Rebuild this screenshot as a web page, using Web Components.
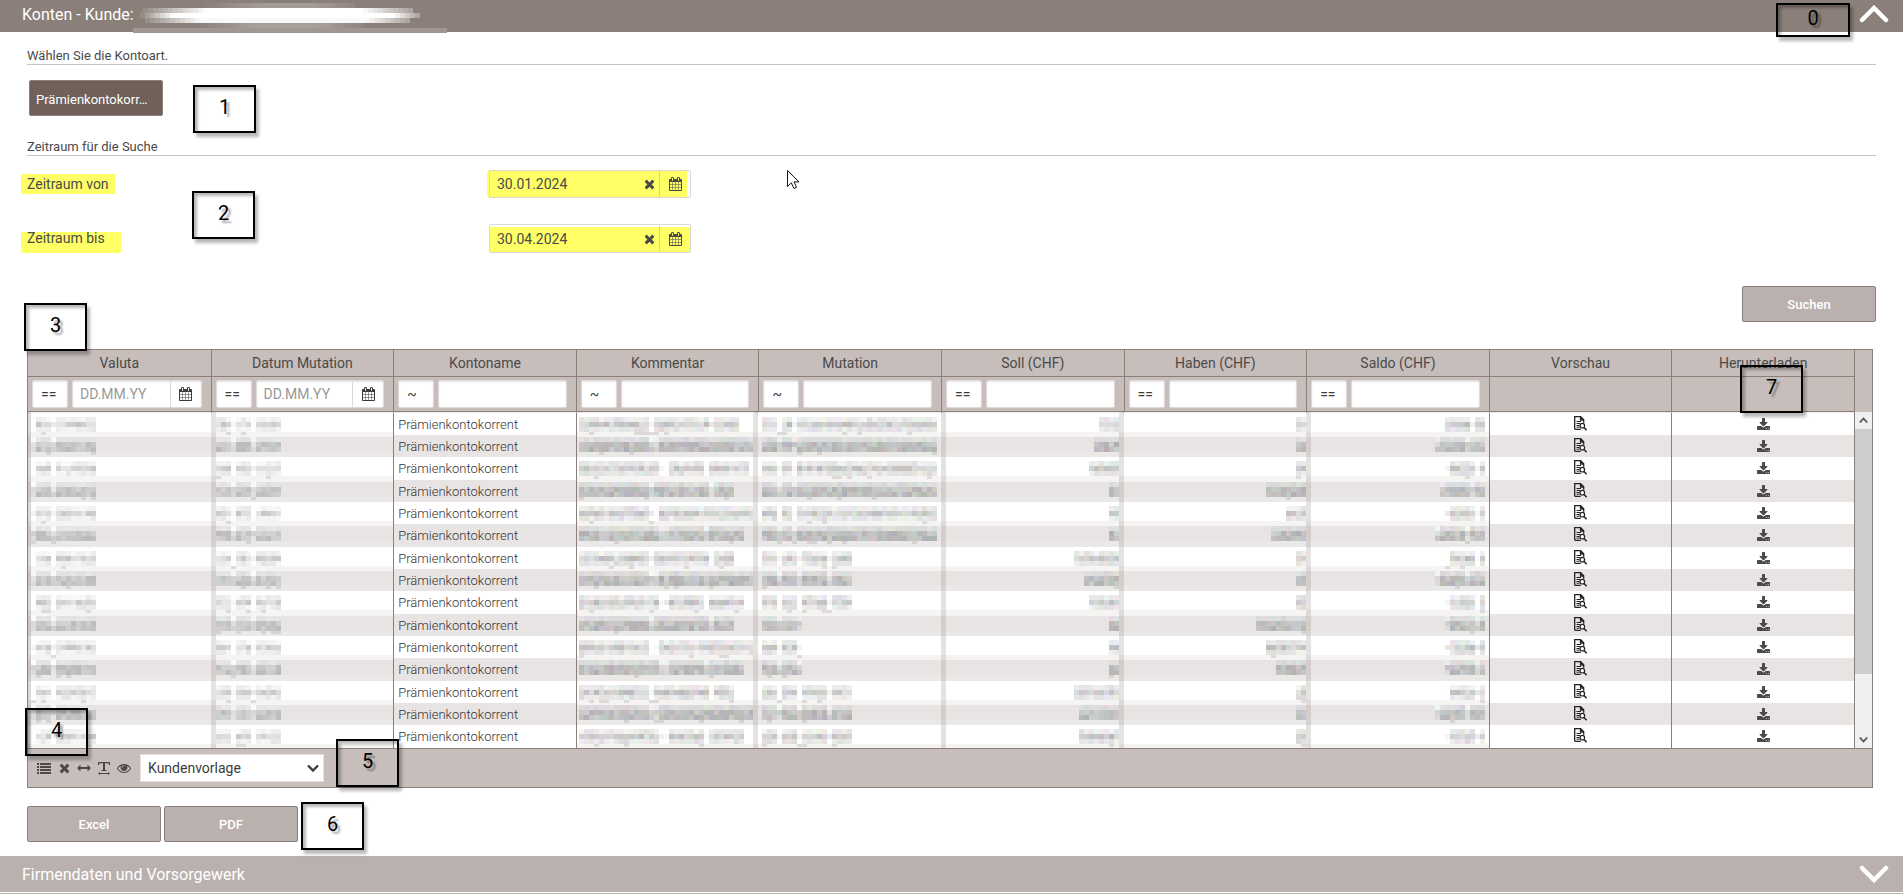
<!DOCTYPE html>
<html lang="de">
<head>
<meta charset="utf-8">
<title>Konten - Kunde</title>
<style>
  html, body { margin: 0; background: #fff; }
  body { font: 14px/20px Roboto, "Liberation Sans", sans-serif; color: #4a4a4a; }
  .page { position: relative; }
  .content { padding: 0 27px; }
  .search { display: flex; justify-content: flex-end; padding-top: 34px; }
  .kind { padding: 15px 0 7px 2px; }
  .fields { display: grid; gap: 26px; padding-top: 14px; }
  .exports { display: flex; gap: 3px; padding: 18px 0 14px; }
  account-grid { margin: 27px 3px 0 0; }
  .end { border-bottom: 1px solid #bab1ae; height: 1px; }
  .pointer { position: absolute; left: 786px; top: 169px; }
</style>
</head>
<body>
<main class="page">
  <panel-bar open label="Panel schliessen">Konten - Kunde:</panel-bar>
  <div class="content">
    <section-title>Wählen Sie die Kontoart.</section-title>
    <div class="kind"><action-button strong>Prämienkontokorr…</action-button></div>
    <section-title>Zeitraum für die Suche</section-title>
    <div class="fields">
      <date-field label="Zeitraum von" value="30.01.2024" mark="first"></date-field>
      <date-field label="Zeitraum bis" value="30.04.2024" mark="second"></date-field>
    </div>
    <div class="search"><action-button>Suchen</action-button></div>
    <account-grid></account-grid>
    <div class="exports"><action-button>Excel</action-button><action-button>PDF</action-button></div>
  </div>
  <panel-bar label="Panel öffnen">Firmendaten und Vorsorgewerk</panel-bar>
  <div class="end"></div>

  <svg class="pointer" width="14" height="22" viewBox="0 0 14 22" aria-hidden="true"><path d="M1.5 1.5v16l3.8-3.6 2.7 5.6 2.6-1.2-2.6-5.4h5z" fill="#fff" stroke="#111122"/></svg>

  <note-marker style="right:53px;top:3px;width:74px;height:34px">0</note-marker>
  <note-marker style="left:193px;top:85px">1</note-marker>
  <note-marker style="left:192px;top:191px">2</note-marker>
  <note-marker style="left:24px;top:303px">3</note-marker>
  <note-marker style="left:25px;top:708px">4</note-marker>
  <note-marker style="left:336px;top:739px">5</note-marker>
  <note-marker style="left:301px;top:802px">6</note-marker>
  <note-marker style="right:100px;top:365px">7</note-marker>
</main>

<script>
const ICONS = {
  times: ['0 0 1408 1792', '<path d="M1298 1322q0 40-28 68l-136 136q-28 28-68 28t-68-28l-294-294-294 294q-28 28-68 28t-68-28l-136-136q-28-28-28-68t28-68l294-294-294-294q-28-28-28-68t28-68l136-136q28-28 68-28t68 28l294 294 294-294q28-28 68-28t68 28l136 136q28 28 28 68t-28 68l-294 294 294 294q28 28 28 68z"/>', 11, 14],
  calendar: ['0 0 1664 1792', '<path d="M128 1664h288v-288h-288v288zm352 0h320v-288h-320v288zm-352-352h288v-320h-288v320zm352 0h320v-320h-320v320zm-352-384h288v-288h-288v288zm736 736h320v-288h-320v288zm-384-736h320v-288h-320v288zm768 736h288v-288h-288v288zm-384-352h320v-320h-320v320zm-352-864v-288q0-13-9.5-22.5t-22.5-9.5h-64q-13 0-22.5 9.5t-9.5 22.5v288q0 13 9.5 22.5t22.5 9.5h64q13 0 22.5-9.5t9.5-22.5zm736 864h288v-320h-288v320zm-384-384h320v-288h-320v288zm384 0h288v-288h-288v288zm32-480v-288q0-13-9.5-22.5t-22.5-9.5h-64q-13 0-22.5 9.5t-9.5 22.5v288q0 13 9.5 22.5t22.5 9.5h64q13 0 22.5-9.5t9.5-22.5zm384-64v1280q0 52-38 90t-90 38h-1408q-52 0-90-38t-38-90v-1280q0-52 38-90t90-38h128v-96q0-66 47-113t113-47h64q66 0 113 47t47 113v96h384v-96q0-66 47-113t113-47h64q66 0 113 47t47 113v96h128q52 0 90 38t38 90z"/>', 13, 14],
  download: ['64 0 1664 1536', '<path d="M1344 1344q0-26-19-45t-45-19-45 19-19 45 19 45 45 19 45-19 19-45zm256 0q0-26-19-45t-45-19-45 19-19 45 19 45 45 19 45-19 19-45zm128-224v320q0 40-28 68t-68 28h-1472q-40 0-68-28t-28-68v-320q0-40 28-68t68-28h465l135 136q58 56 136 56t136-56l136-136h464q40 0 68 28t28 68zm-325-569q17 41-14 70l-448 448q-18 19-45 19t-45-19l-448-448q-31-29-14-70 17-39 59-39h256v-448q0-26 19-45t45-19h256q26 0 45 19t19 45v448h256q42 0 59 39z"/>', 13, 12],
  eye: ['0 0 1792 1792', '<path d="M1664 960q-152-236-381-353 61 104 61 225 0 185-131.5 316.5t-316.5 131.5-316.5-131.5-131.5-316.5q0-121 61-225-229 117-381 353 133 205 333.5 326.5t434.5 121.5 434.5-121.5 333.5-326.5zm-720-384q0-20-14-34t-34-14q-125 0-214.5 89.5t-89.5 214.5q0 20 14 34t34 14 34-14 14-34q0-86 61-147t147-61q20 0 34-14t14-34zm848 384q0 34-20 69-140 230-376.5 368.5t-499.5 138.5-499.5-139-376.5-368q-20-35-20-69t20-69q140-229 376.5-368t499.5-139 499.5 139 376.5 368q20 35 20 69z"/>', 14, 14],
  list: ['0 0 14 12', '<path d="M0 1h2v2H0zM3 1h11v2H3zM0 4h2v2H0zM3 4h11v2H3zM0 7h2v2H0zM3 7h11v2H3zM0 10h2v2H0zM3 10h11v2H3z"/>', 14, 12],
  widen: ['0 0 14 8', '<path d="M0 4l3.500-3.500v2.500h7V.5L14 4l-3.500 3.500V5h-7v2.500z"/>', 14, 8],
  textwidth: ['0 0 12 13', '<path d="M0 0h12v3h-1l-.5-1.700H7V8h1.500v1h-5V8H5V1.300H1.500L1 3H0zM0 11.500L2 10v1h8v-1l2 1.500L10 13v-1H2v1z"/>', 12, 13],
  preview: ['0 0 13 15', '<path d="M.7 13.300V.7h6l3 3v3M.7 13.300h6M6.500.7v3.300h3.200" fill="none" stroke="currentColor" stroke-width="1.300"/><path d="M2.500 5.500h4.500M2.500 7.500h3.500M2.500 9.500h3M2.500 11.200h3" stroke="currentColor"/><circle cx="8.300" cy="9.700" r="2.300" fill="#fff" stroke="currentColor" stroke-width="1.200"/><path d="M10 11.500l2.600 2.700" stroke="currentColor" stroke-width="1.400"/>', 13, 15],
  up: ['0 0 30 18', '<path d="M3 15L15 3l12 12" fill="none" stroke="currentColor" stroke-width="4.500" stroke-linecap="round"/>', 30, 18],
  down: ['0 0 30 18', '<path d="M3 3l12 12L27 3" fill="none" stroke="currentColor" stroke-width="4.500" stroke-linecap="round"/>', 30, 18],
  tinyup: ['0 0 9 7', '<path d="M.8 5.500l3.700-4 3.700 4" fill="none" stroke="currentColor" stroke-width="1.800"/>', 9, 7],
  tinydown: ['0 0 9 7', '<path d="M.8 1.500l3.700 4 3.700-4" fill="none" stroke="currentColor" stroke-width="1.800"/>', 9, 7],
  caret: ['0 0 12 8', '<path d="M1 1.500l5 5 5-5" fill="none" stroke="currentColor" stroke-width="2.400"/>', 12, 8]
};
const icon = name => `<fa-icon name="${name}"></fa-icon>`;

class Base extends HTMLElement {
  connectedCallback() {
    if (this.shadowRoot) return;
    this.attachShadow({ mode: 'open' }).innerHTML =
      `<style>*{box-sizing:border-box}button,input,select{font:inherit;color:inherit;margin:0}${this.css()}</style>${this.html()}`;
  }
}

customElements.define('fa-icon', class extends Base {
  css() { return ':host{display:block;flex:none}svg{display:block;fill:currentColor}'; }
  html() {
    const [box, shape, w, h] = ICONS[this.getAttribute('name')];
    return `<svg width="${w}" height="${h}" viewBox="${box}" aria-hidden="true">${shape}</svg>`;
  }
});

customElements.define('panel-bar', class extends Base {
  css() { return `
    :host{display:flex;position:relative;align-items:center;justify-content:space-between;height:36px;padding:0 14px 0 22px;background:#bab1ae;color:#fff}
    :host([open]){height:32px;background:#8a7f79}
    h2{margin:0;padding-top:2px;font-size:16px;line-height:20px;font-weight:400}
    :host([open]) h2{padding:0 0 2px}
    button{border:0;padding:0;background:none;color:#fff;cursor:pointer}
    :host([open]) button{padding-bottom:4px}
    svg{position:absolute;left:133px;top:0}`; }
  html() {
    const open = this.hasAttribute('open');
    return `<h2><slot></slot></h2>${open ? this.hiddenName() : ''}
      <button type="button" aria-label="${this.getAttribute('label')}">${icon(open ? 'up' : 'down')}</button>`;
  }
  /* the blotted-out customer name: white block rows that fade at both ends */
  hiddenName() {
    const bands = [[3, 72, 222, .22, 60], [8, 10, 278, 1, 70], [13, 7, 284, 1, 35], [18, 12, 276, .95, 60], [23, 66, 228, .25, 60]];
    let out = '';
    for (const [y, from, to, alpha, fade] of bands)
      for (let x = from; x < to; x += 5) {
        const a = alpha * Math.min(1, .12 + (x - from) / fade, .25 + (to - x) / fade);
        out += `<rect x="${x}" y="${y}" width="5" height="5" opacity="${a.toFixed(2)}"/>`;
      }
    return `<svg width="314" height="33" fill="#fff" shape-rendering="crispEdges" aria-hidden="true"><rect y="28" width="314" height="5" fill="#a19690"/>${out}</svg>`;
  }
});

customElements.define('section-title', class extends Base {
  css() { return `:host{display:block;padding-top:16px;border-bottom:1px solid #cbc2bd}
    h3{margin:0;font-size:13px;line-height:16px;font-weight:400}`; }
  html() { return '<h3><slot></slot></h3>'; }
});

customElements.define('action-button', class extends Base {
  css() { return `:host{display:block;width:134px}
    button{display:block;width:100%;height:36px;padding:1px 0 0;border:1px solid #8a7f79;border-radius:2px;background:#bab1ae;color:#fff;font-size:13px;line-height:16px;font-weight:500;cursor:pointer}
    :host([strong]) button{background:#6f6159;font-weight:400;text-align:left;padding:3px 6px 0}`; }
  html() { return '<button type="button"><slot></slot></button>'; }
});

customElements.define('date-field', class extends Base {
  css() { return `
    :host{display:grid;grid-template-columns:462px 202px;height:28px}
    label{justify-self:start;align-self:start;margin:4px 0 0 -6px;padding:0 6px;line-height:20px;background:#ff6}
    :host([mark=second]) label{padding-right:16px;background:linear-gradient(#fff 4px,#ff6 4px);padding-bottom:1px;height:25px}
    .box{display:flex;align-items:center;border:1px solid #d9d9d4;border-radius:2px;background:linear-gradient(90deg,#ff6 197px,#fff 197px)}
    :host([mark=first]) .box{box-shadow:-2px 0 #ff6}
    :host([mark=second]) .box{background:linear-gradient(#fff 2px,#ff6 2px)}
    input{flex:1;min-width:0;height:26px;border:0;padding:0 0 0 7px;background:none;outline:0}
    button{display:grid;place-items:center;height:26px;border:0;padding:0;background:none;cursor:pointer}
    .clear{width:20px}.pick{width:31px;border-left:1px solid #dcdc55}`; }
  html() { return `<label for="d">${this.getAttribute('label')}</label>
    <div class="box"><input id="d" value="${this.getAttribute('value')}">
    <button class="clear" type="button" aria-label="Leeren">${icon('times')}</button>
    <button class="pick" type="button" aria-label="Kalender">${icon('calendar')}</button></div>`; }
});

customElements.define('note-marker', class extends Base {
  css() { return `:host{position:absolute;box-sizing:border-box;display:flex;align-items:center;justify-content:center;width:63px;height:48px;padding-bottom:4px;border:2px solid #000;box-shadow:3px 4px 3px rgba(0,0,0,.28),inset 3px 3px 3px rgba(0,0,0,.28);color:#000;font-size:20px;line-height:24px;font-weight:400;text-shadow:3px 3px 2px rgba(0,0,0,.35)}`; }
  html() { return '<slot></slot>'; }
});

/* Pixelated stand-in for a hidden value, in 5px blocks. */
customElements.define('mosaic-text', class extends Base {
  css() { return ':host{display:block}svg{display:block}:host([end]) svg{margin-left:auto}'; }
  html() {
    const n = +this.getAttribute('blocks'), dark = this.hasAttribute('dark'), soft = this.hasAttribute('soft');
    const gaps = (this.getAttribute('gaps') || '').split(',').filter(Boolean).map(Number);
    let seed = +this.getAttribute('seed') * 7919 + 13;
    const rnd = () => (seed = (seed * 16807) % 2147483647) / 2147483647;
    const bands = dark ? [[2, 220, 8], [7, 192, 26], [12, 190, 24]] : [[4, 234, 16], [9, 206, 34], [14, 230, 18]];
    let out = '';
    for (let i = 0; i < n; i++) {
      const light = gaps.includes(i) ? (dark ? 20 : 36) : 0;
      for (const [y, base, spread] of bands) {
        const v = base + (rnd() - .5) * spread + light + (soft ? 8 : 0), t = () => Math.min(254, Math.round(v + (rnd() - .5) * (soft ? 3 : 14)));
        out += `<rect x="${i * 5}" y="${y}" width="5" height="5" fill="rgb(${t()},${t()},${t()})"/>`;
      }
      if (rnd() > .88) out += `<rect x="${i * 5}" y="${dark ? 17 : 19}" width="5" height="3" fill="${dark ? '#d6d2d1' : '#dddbda'}"/>`;
    }
    return `<svg width="${n * 5}" height="22" shape-rendering="crispEdges" aria-hidden="true">${out}</svg>`;
  }
});

customElements.define('filter-cell', class extends Base {
  css() { return `
    :host{display:flex;gap:4px;height:28px;padding:0 9px 0 4px;color:#3c3c3c;font-weight:400}
    .op,.val{height:28px;background:#fff;border:1px solid #dedad8;border-radius:2px;box-shadow:inset 0 1px 2px #e6e6e6}
    .op{flex:none;width:36px;padding:0 0 0 8px;text-align:left}
    .val{display:flex;flex:1;min-width:0}
    input{flex:1;width:0;min-width:0;border:0;padding:0 0 0 7px;background:none;outline:0}
    input::placeholder{color:#999;opacity:1}
    .pick{display:grid;place-items:center;width:31px;padding:0;border:0;border-left:1px solid #dedad8;background:none}`; }
  html() { const date = this.hasAttribute('date'), of = this.getAttribute('of');
    return `<button class="op" type="button" aria-label="Operator ${of}">${this.getAttribute('op')}</button>
    <div class="val"><input aria-label="Filter ${of}" ${date ? 'placeholder="DD.MM.YY"' : ''}>${date ? `<button class="pick" type="button" aria-label="Kalender ${of}">${icon('calendar')}</button>` : ''}</div>`; }
});

customElements.define('scroll-rail', class extends Base {
  css() { return `:host{display:flex;flex-direction:column;background:#f0f0f0;color:#505050}
    span{display:grid;place-items:center;height:17px;flex:none}
    .thumb{height:245px;background:#cdcdcd}.rest{flex:1}`; }
  html() { return `<span>${icon('tinyup')}</span><div class="thumb"></div><div class="rest"></div><span>${icon('tinydown')}</span>`; }
});

const COLUMNS = [
  ['Valuta', '==', 1], ['Datum Mutation', '==', 1], ['Kontoname', '~'], ['Kommentar', '~'], ['Mutation', '~'],
  ['Soll (CHF)', '=='], ['Haben (CHF)', '=='], ['Saldo (CHF)', '=='], ['Vorschau'], ['Herunterladen']
];
/* lengths, in blocks, of the hidden Kommentar, Mutation, Soll, Haben and Saldo values */
const ROWS = [
  [32, 35, 4, 2, 9], [35, 35, 5, 2, 10], [34, 35, 6, 2, 8], [31, 35, 2, 8, 9], [35, 35, 2, 4, 8],
  [33, 35, 2, 7, 10], [31, 18, 9, 2, 8], [35, 18, 7, 2, 10], [33, 18, 6, 2, 8], [31, 8, 2, 10, 8],
  [35, 8, 2, 8, 8], [33, 8, 2, 6, 8], [31, 18, 9, 2, 8], [35, 18, 8, 2, 10], [33, 18, 8, 2, 8]
];

customElements.define('account-grid', class extends Base {
  css() { return `
    :host{display:block;border:1px solid #8a7f79;background:#c7bebb}
    .top{display:grid;grid-template-columns:1fr 17px}
    table{width:100%;table-layout:fixed;border-collapse:separate;border-spacing:0;border-right:1px solid #8a7f79}
    th{height:27px;padding:0;border-bottom:1px solid #8a7f79;border-left:1px solid #8a7f79;font-weight:400;line-height:20px;text-align:center}
    .filters th{height:35px;vertical-align:middle}
    th:first-child{border-left:0}
    td{height:22px;padding:0;border-left:1px solid #8a7f79;background:#fff;overflow:hidden;vertical-align:top}
    tbody tr:nth-child(3n) td{height:23px}
    tbody tr:first-child td{height:23px;border-top:1px solid #efeceb}
    tbody tr:nth-child(even) td{background:#e8e4e3}
    td.veil{background:linear-gradient(#fff 19px,#f5f4f3 19px)}
    tbody tr:nth-child(even) td.veil{background:linear-gradient(#f5f4f3 2px,#e8e4e3 2px,#e8e4e3 17px,#ebe9e7 17px)}
    td.c0{border-left:3px solid rgba(138,127,121,.3)}
    td.c1,td.c5,td.c7{border-left:5px solid rgba(138,127,121,.22)}
    td.c3,td.c5{border-right:5px solid rgba(138,127,121,.22)}
    td.c4,td.c6{border-left:0}
    td.c3{padding-left:2px}td.c4{padding-left:4px}td.c7{padding-right:4px}
    td.name{padding:2px 0 0 4px;font-size:13px;line-height:20px;font-weight:300;color:#333}
    td button{display:block;border:0;background:none;margin:0 auto;padding:1px 0 0;color:#222;height:20px}
    td .load{padding-top:5px;color:#4a4a4a}
    td button fa-icon{height:15px}
    .side{display:flex;flex-direction:column}
    .side scroll-rail{flex:1;margin-top:62px}
    footer{display:flex;align-items:center;height:39px;padding:0 9px;border-top:1px solid #8a7f79;gap:7px}
    footer button{display:grid;place-items:center;width:14px;height:20px;padding:0;border:0;background:none}
    .tools{display:flex;gap:6px}
    .pick{display:grid;align-items:center;width:184px;margin-left:2px;color:#3c3c3c}
    .pick>*{grid-area:1/1}
    .pick fa-icon{justify-self:end;margin-right:5px;pointer-events:none}
    select{appearance:none;width:100%;height:28px;padding:0 20px 0 7px;border:1px solid #e4e0de;border-radius:0;background:#fff}`; }
  html() {
    const head = COLUMNS.map(c => `<th scope="col">${c[0]}</th>`).join('');
    const filters = COLUMNS.map(c => `<th>${c[1] ? `<filter-cell of="${c[0]}" op="${c[1]}" ${c[2] ? 'date' : ''}></filter-cell>` : ''}</th>`).join('');
    const body = ROWS.map((r, i) => {
      const dark = i % 2 ? 'dark' : '';
      const m = (col, n, extra = '', gaps = '') => `<td class="veil c${col}"><mosaic-text blocks="${n}" seed="${i * 10 + col + 1}" gaps="${gaps}" ${dark} ${extra}></mosaic-text></td>`;
      return `<tr>${m(0, 13, 'soft', '0,4')}${m(1, 13, 'soft', '3,7')}<td class="name">Prämienkontokorrent</td>
        ${m(3, r[0], '', ['14,26', '14,15', '16,17,25'][i % 3])}${m(4, r[1], '', r[1] > 30 ? '3,6' : '3,7,13')}${m(5, r[2], 'end')}${m(6, r[3], 'end')}${m(7, r[4], 'end', '0,6')}
        <td><button type="button" aria-label="Vorschau">${icon('preview')}</button></td>
        <td><button class="load" type="button" aria-label="Herunterladen">${icon('download')}</button></td></tr>`;
    }).join('');
    const tools = [['list', 'Spalten'], ['times', 'Zurücksetzen'], ['widen', 'Breite'], ['textwidth', 'Textbreite'], ['eye', 'Ansicht']]
      .map(([n, l]) => `<button type="button" aria-label="${l}">${icon(n)}</button>`).join('');
    return `<div class="top"><table><thead><tr>${head}</tr><tr class="filters">${filters}</tr></thead><tbody>${body}</tbody></table>
      <div class="side"><scroll-rail></scroll-rail></div></div>
      <footer><div class="tools">${tools}</div><div class="pick"><select aria-label="Vorlage"><option>Kundenvorlage</option></select>${icon('caret')}</div></footer>`;
  }
});
</script>
</body>
</html>
